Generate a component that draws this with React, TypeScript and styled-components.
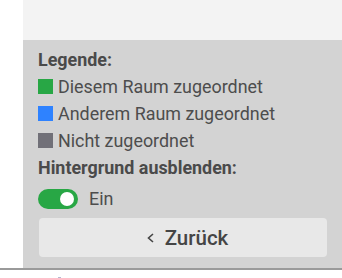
import React, { FC } from 'react';
import styled, { createGlobalStyle } from 'styled-components';

const GlobalStyle = createGlobalStyle`
  html, body {
    margin: 0;
    padding: 0;
    background: #fff;
  }
  body {
    font-family: Roboto, "Liberation Sans", sans-serif;
    overflow: hidden;
  }
`;

const Page = styled.div`
  width: 342px;
  height: 278px;
  display: flex;
  flex-direction: column;
  overflow: hidden;
`;

const Main = styled.div`
  display: flex;
  padding-left: 23px;
`;

const Panel = styled.div`
  flex: 1;
  display: flex;
  flex-direction: column;
`;

const TopArea = styled.div`
  height: 40px;
  background-color: #f3f3f3;
`;

const LegendBox = styled.div`
  background-color: #d3d3d3;
  padding: 6px 15px 11px 15px;
  color: #4d4d4d;
  font-size: 17.9px;
  display: flex;
  flex-direction: column;
`;

const Row = styled.div`
  height: 27px;
  display: flex;
  align-items: center;
  white-space: nowrap;
`;

const Heading = styled(Row)`
  font-weight: 700;
  color: #4a4a4a;
`;

const Swatch = styled.i<{ $color: string }>`
  display: inline-block;
  flex: none;
  width: 15px;
  height: 15px;
  margin-right: 5px;
  background-color: ${(p) => p.$color};
`;

const ToggleRow = styled(Row)`
  margin-top: 4px;
  gap: 11px;
`;

const Toggle = styled.span<{ $on: boolean }>`
  position: relative;
  display: inline-block;
  width: 40px;
  height: 20px;
  border-radius: 10px;
  background-color: ${(p) => (p.$on ? '#28a745' : '#999')};

  &::after {
    content: '';
    position: absolute;
    top: 3px;
    left: ${(p) => (p.$on ? '22px' : '3px')};
    width: 14px;
    height: 14px;
    border-radius: 50%;
    background-color: #fff;
  }
`;

const BackButton = styled.button`
  margin: 6px 0 0 1px;
  height: 39px;
  border: none;
  border-radius: 4px;
  background-color: #e8e8e8;
  color: #454545;
  font-family: Roboto, "Liberation Sans", sans-serif;
  font-size: 20.5px;
  font-weight: 500;
  display: flex;
  align-items: center;
  justify-content: center;
  gap: 10px;
  padding: 0 0 0 8px;
  cursor: pointer;
`;

const Chevron = styled.svg`
  width: 9px;
  height: 12px;
`;

const Footer = styled.div`
  border-top: 2px solid #9a9a9a;
  height: 10px;
  position: relative;
`;

const FooterMark = styled.span`
  position: absolute;
  left: 58px;
  top: 7px;
  width: 3px;
  height: 2px;
  background-color: #b8b8d0;
`;

const legend = [
  { color: '#28a745', label: 'Diesem Raum zugeordnet' },
  { color: '#2e82ff', label: 'Anderem Raum zugeordnet' },
  { color: '#717078', label: 'Nicht zugeordnet' },
];

const App: FC = () => (
  <Page>
    <GlobalStyle />
    <Main>
      <Panel>
        <TopArea />
        <LegendBox>
          <Heading>Legende:</Heading>
          {legend.map((item) => (
            <Row key={item.label}>
              <Swatch $color={item.color} />
              {item.label}
            </Row>
          ))}
          <Heading>Hintergrund ausblenden:</Heading>
          <ToggleRow>
            <Toggle $on />
            Ein
          </ToggleRow>
          <BackButton>
            <Chevron viewBox="0 0 9 12">
              <path d="M7 2 L2.5 6 L7 10" fill="none" stroke="#454545" strokeWidth="1.6" />
            </Chevron>
            Zurück
          </BackButton>
        </LegendBox>
      </Panel>
    </Main>
    <Footer>
      <FooterMark />
    </Footer>
  </Page>
);

export default App;
